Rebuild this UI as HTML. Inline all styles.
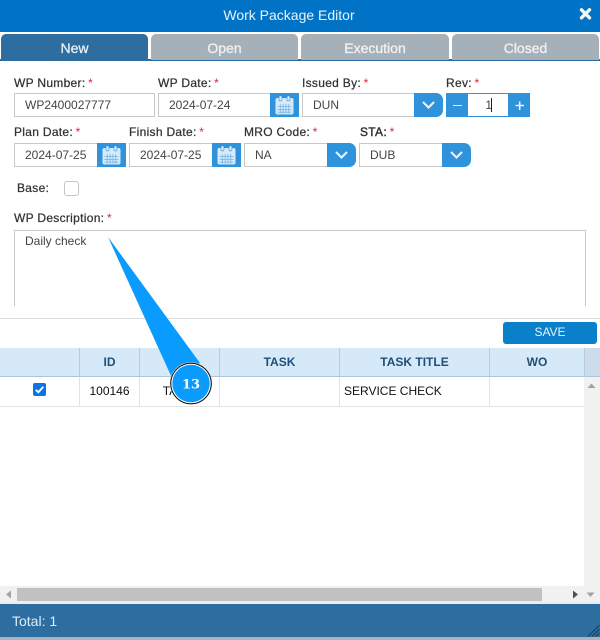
<!DOCTYPE html>
<html>
<head>
<meta charset="utf-8">
<style>
html,body{margin:0;padding:0;background:#fff}
body{width:600px;height:640px;position:relative;overflow:hidden;font-family:"Liberation Sans",sans-serif;font-size:12px;color:#333}
.a{position:absolute;box-sizing:border-box}
.tab{position:absolute;top:34px;height:26px;width:147px;background:#a5b0b9;color:#eef1f3;border-radius:5px 5px 0 0;text-align:center;font-size:14px;line-height:28px;-webkit-text-stroke:.35px #eef1f3}
.lb{position:absolute;font-size:12px;line-height:14px;color:#333;white-space:nowrap;letter-spacing:.3px;-webkit-text-stroke:.25px #333}
.lb i{font-style:normal;color:#e0243c;-webkit-text-stroke:0;margin-left:-1px}
.in{position:absolute;box-sizing:border-box;height:24px;border:1px solid #c8c8c8;background:#fff;font-size:12px;line-height:22px;color:#444;padding-left:10px;white-space:nowrap}
.cal{position:absolute;width:29px;height:24px;background:#2f93dc}
.dd{position:absolute;width:29px;height:24px;background:#2f93dc;border-radius:0 7px 7px 0}
.th{position:absolute;top:348px;height:29px;box-sizing:border-box;background:#d6e9f8;border-right:1px solid #b6cbdc;border-bottom:1px solid #aec5d9;text-align:center;font-weight:bold;font-size:12px;line-height:28px;color:#1f4e79}
.td{position:absolute;top:377px;height:29px;box-sizing:border-box;border-right:1px solid #e2e2e2;font-size:12px;line-height:29px;color:#111;white-space:nowrap}
</style>
</head>
<body>
<!-- header -->
<div class="a" style="left:0;top:0;width:600px;height:32px;background:#0073c6;color:#e8f3fb;text-align:center;font-size:14px;line-height:30px"><span style="position:relative;left:-11px">Work Package Editor</span></div>
<svg class="a" style="left:578px;top:6px" width="15" height="15" viewBox="0 0 15 15"><path d="M3.5 3.8L11.5 11.8M11.5 3.8L3.5 11.8" stroke="#f4f8fb" stroke-width="3.4" stroke-linecap="round"/></svg>

<!-- tabs -->
<div class="a" style="left:0;top:59px;width:600px;height:2px;background:#2b6a9e"></div>
<div class="tab" style="left:1px;background:#2e6da0;height:27px;color:#e3edf5;-webkit-text-stroke:.35px #e3edf5">New</div>
<div class="tab" style="left:151px">Open</div>
<div class="tab" style="left:301px;width:148px">Execution</div>
<div class="tab" style="left:452px">Closed</div>

<!-- row 1 -->
<div class="lb" style="left:14px;top:76px">WP Number: <i>*</i></div>
<div class="lb" style="left:158px;top:76px">WP Date: <i>*</i></div>
<div class="lb" style="left:302px;top:76px">Issued By: <i>*</i></div>
<div class="lb" style="left:446px;top:76px">Rev: <i>*</i></div>

<div class="in" style="left:14px;top:93px;width:141px">WP2400027777</div>
<div class="in" style="left:158px;top:93px;width:113px">2024-07-24</div>
<div class="cal" style="left:270px;top:93px"><svg width="29" height="24" viewBox="0 0 29 24"><use href="#c"/></svg></div>
<div class="in" style="left:302px;top:93px;width:113px">DUN</div>
<div class="dd" style="left:414px;top:93px"><svg width="29" height="24" viewBox="0 0 29 24"><use href="#v"/></svg></div>
<div class="a" style="left:446px;top:93px;width:84px;height:24px;background:#2f93dc"></div>
<div class="a" style="left:468px;top:94px;width:40px;height:22px;background:#fff;font-size:12px;line-height:22px;color:#444;text-align:right;padding-right:16px">1</div>
<div class="a" style="left:491px;top:98px;width:1px;height:14px;background:#222"></div>
<div class="a" style="left:453px;top:105px;width:9px;height:1px;background:#dcecf8"></div>
<svg class="a" style="left:514px;top:100px" width="11" height="11" viewBox="0 0 11 11"><path d="M1.5 5.5H10M5.7 1.5V10" stroke="#eef6fc" stroke-width="1.5"/></svg>

<!-- row 2 -->
<div class="lb" style="left:14px;top:125px">Plan Date: <i>*</i></div>
<div class="lb" style="left:129px;top:125px">Finish Date: <i>*</i></div>
<div class="lb" style="left:244px;top:125px">MRO Code: <i>*</i></div>
<div class="lb" style="left:360px;top:125px;-webkit-text-stroke:.4px #333">STA: <i>*</i></div>

<div class="in" style="left:14px;top:143px;width:84px">2024-07-25</div>
<div class="cal" style="left:97px;top:143px"><svg width="29" height="24" viewBox="0 0 29 24"><use href="#c"/></svg></div>
<div class="in" style="left:129px;top:143px;width:84px">2024-07-25</div>
<div class="cal" style="left:212px;top:143px"><svg width="29" height="24" viewBox="0 0 29 24"><use href="#c"/></svg></div>
<div class="in" style="left:244px;top:143px;width:84px">NA</div>
<div class="dd" style="left:327px;top:143px"><svg width="29" height="24" viewBox="0 0 29 24"><use href="#v"/></svg></div>
<div class="in" style="left:359px;top:143px;width:84px">DUB</div>
<div class="dd" style="left:442px;top:143px"><svg width="29" height="24" viewBox="0 0 29 24"><use href="#v"/></svg></div>

<!-- base -->
<div class="lb" style="left:17px;top:181px">Base:</div>
<div class="a" style="left:64px;top:181px;width:15px;height:15px;border:1px solid #c4c4c4;border-radius:3px;background:#fff"></div>

<!-- description -->
<div class="lb" style="left:14px;top:211px">WP Description: <i>*</i></div>
<div class="a" style="left:14px;top:230px;width:572px;height:76px;border:1px solid #c8c8c8;border-bottom:0;font-size:12px;line-height:14px;color:#444;padding:3px 0 0 10px">Daily check</div>

<div class="a" style="left:0;top:318px;width:600px;height:1px;background:#ddd"></div>
<div class="a" style="left:503px;top:322px;width:94px;height:22px;background:#0a80cb;border-radius:3px;color:#e8f3fb;text-align:center;font-size:12px;line-height:20px">SAVE</div>

<!-- table -->
<div class="th" style="left:0;width:80px"></div>
<div class="th" style="left:80px;width:60px">ID</div>
<div class="th" style="left:140px;width:80px"></div>
<div class="th" style="left:220px;width:120px">TASK</div>
<div class="th" style="left:340px;width:150px">TASK TITLE</div>
<div class="th" style="left:490px;width:95px">WO</div>
<div class="a" style="left:585px;top:348px;width:15px;height:29px;background:#ccdcea;border-bottom:1px solid #aec5d9"></div>

<div class="td" style="left:0;width:80px"></div>
<div class="a" style="left:33px;top:383px;width:13px;height:13px;background:#0b74e5;border-radius:2px"><svg width="13" height="13" viewBox="0 0 13 13" style="display:block"><path d="M2.8 6.8L5.4 9.3L10.3 3.8" fill="none" stroke="#fff" stroke-width="1.9"/></svg></div>
<div class="td" style="left:80px;width:60px;text-align:center">100146</div>
<div class="td" style="left:140px;width:80px;text-align:center;padding-right:3px">TASK</div>
<div class="td" style="left:220px;width:120px"></div>
<div class="td" style="left:340px;width:150px;padding-left:4px">SERVICE CHECK</div>
<div class="td" style="left:490px;width:95px;border-right:0"></div>
<div class="a" style="left:0;top:406px;width:584px;height:1px;background:#e2e2e2"></div>

<!-- vertical scrollbar -->
<div class="a" style="left:584px;top:377px;width:16px;height:209px;background:#f1f1f1"></div>
<svg class="a" style="left:587px;top:383px" width="9" height="6"><path d="M4.5 0.5L8.5 5H0.5Z" fill="#a3a3a3"/></svg>

<!-- horizontal scrollbar -->
<div class="a" style="left:0;top:586px;width:600px;height:17px;background:#f1f1f1"></div>
<div class="a" style="left:17px;top:588px;width:525px;height:13px;background:#c1c1c1"></div>
<svg class="a" style="left:5px;top:590px" width="7" height="9"><path d="M6 0.5V8.5L1 4.5Z" fill="#a3a3a3"/></svg>
<svg class="a" style="left:572px;top:590px" width="7" height="9"><path d="M1 0.5V8.5L6 4.5Z" fill="#505050"/></svg>
<svg class="a" style="left:586px;top:592px" width="9" height="6"><path d="M0.5 0.5H8.5L4.5 5Z" fill="#a3a3a3"/></svg>

<!-- footer -->
<div class="a" style="left:0;top:601px;width:600px;height:3px;background:#e6eff6"></div>
<div class="a" style="left:0;top:604px;width:600px;height:33px;background:#2e6da0;color:#d9effc;font-size:14px;line-height:34px;padding-left:12px">Total: 1</div>
<div class="a" style="left:0;top:637px;width:600px;height:3px;background:#a9b4bd"></div>
<svg class="a" style="left:587px;top:624px" width="13" height="13"><path d="M1 12.5L12.5 1M5 12.5L12.5 5M9 12.5L12.5 9" stroke="#1c3b55" stroke-width="1"/></svg>

<!-- callout -->
<svg class="a" style="left:0;top:0" width="600" height="640" viewBox="0 0 600 640">
<path d="M108 237L200 363L172 378Z" fill="#0a9bff"/>
<circle cx="191" cy="383.5" r="20" fill="#0a9bff" stroke="#fff" stroke-width="2.6"/>
<circle cx="191" cy="383.5" r="20.3" fill="none" stroke="#111" stroke-width="1.1"/>
<text x="191" y="388.5" text-anchor="middle" font-family="'DejaVu Serif',serif" font-weight="bold" font-size="13" fill="#fff">13</text>
</svg>

<!-- icon sources -->
<svg width="0" height="0" style="position:absolute">
<defs>
<g id="c">
<rect x="5.5" y="5" width="18" height="16.5" rx="2" fill="#d6eafa"/>
<rect x="9" y="2.8" width="3" height="5.2" rx="1.4" fill="#d6eafa" stroke="#2f93dc" stroke-width=".6"/>
<rect x="17" y="2.8" width="3" height="5.2" rx="1.4" fill="#d6eafa" stroke="#2f93dc" stroke-width=".6"/>
<path d="M7.5 13.6H21.5M7.5 16.4H21.5M7.5 19.2H21.5M10.3 11V20.5M13.1 11V20.5M15.9 11V20.5M18.7 11V20.5" stroke="#7db9e8" stroke-width=".9"/>
</g>
<path id="v" d="M9 9L14.5 14.5L20 9" fill="none" stroke="#e8f4fc" stroke-width="2.1"/>
</defs>
</svg>
</body>
</html>
